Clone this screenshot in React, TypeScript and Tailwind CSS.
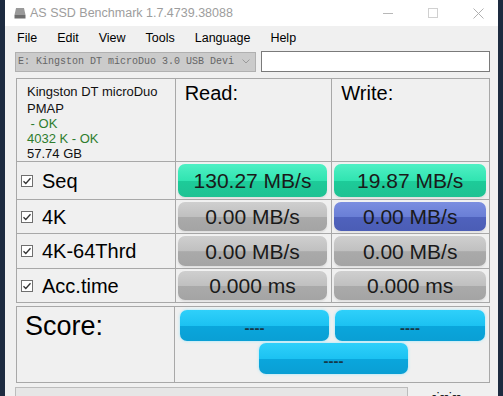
import React from "react";

const font = { fontFamily: '"Liberation Sans", Arial, sans-serif' };

const GREEN =
  "bg-[linear-gradient(to_bottom,#4ff0c4,#31e4b1_50%,#1dcb99_52%,#1fc293)]";
const GRAY =
  "bg-[linear-gradient(to_bottom,#cfcfcf,#c0c0c0_50%,#aaaaaa_52%,#a4a4a4)]";
const BLUE =
  "bg-[linear-gradient(to_bottom,#7b8ee0,#6a7fd6_50%,#4f62bd_52%,#4b5db5)]";
const CYAN =
  "bg-[linear-gradient(to_bottom,#2fd0fa,#1cc2f2_50%,#0aa6dc_52%,#0a9fd4)]";

const rows = [
  { label: "Seq", read: "130.27 MB/s", write: "19.87 MB/s", rc: GREEN, wc: GREEN, h: "h-[38px]" },
  { label: "4K", read: "0.00 MB/s", write: "0.00 MB/s", rc: GRAY, wc: BLUE, h: "h-[34px]" },
  { label: "4K-64Thrd", read: "0.00 MB/s", write: "0.00 MB/s", rc: GRAY, wc: GRAY, h: "h-[35px]" },
  { label: "Acc.time", read: "0.000 ms", write: "0.000 ms", rc: GRAY, wc: GRAY, h: "h-[34px]" },
];

function Check() {
  return (
    <svg width="12" height="12" viewBox="0 0 12 12" className="shrink-0">
      <rect x="0.5" y="0.5" width="11" height="11" fill="#fff" stroke="#6f6f6f" />
      <path d="M2.5 6.2 L4.8 8.5 L9.5 3.2" fill="none" stroke="#333" strokeWidth="1.3" />
    </svg>
  );
}

function Bar({ text, color }: { text: string; color: string }) {
  return (
    <div
      className={`h-full w-full rounded-[7px] ${color} flex items-center justify-center pt-[1px] text-[21px] text-[#1a1a1a] shadow-[0_0_2px_rgba(255,255,255,0.9),0_1px_2px_rgba(0,0,0,0.15)]`}
    >
      {text}
    </div>
  );
}

function ScoreBar({ className }: { className: string }) {
  return (
    <div
      className={`${className} h-[31px] rounded-[7px] ${CYAN} flex items-center justify-center pt-[3px] text-[15px] leading-[15px] font-bold text-[#163848] shadow-[0_0_3px_rgba(140,230,255,0.9)]`}
    >
      ----
    </div>
  );
}

export default function App() {
  return (
    <div className="flex w-[503px] h-[396px] overflow-hidden bg-[#1d2b40]" style={font}>
      <div className="w-[5px] shrink-0" />
      <div className="w-[493px] shrink-0 bg-[#f0f0f0] overflow-hidden">
        {/* title bar */}
        <div className="h-[26px] bg-white flex items-center relative">
          <svg width="12" height="12" viewBox="0 0 12 12" className="ml-[9px]">
            <path d="M2 1 H10 L11.5 8 H0.5 Z" fill="#9a9a9a" />
            <rect x="0.5" y="8" width="11" height="3.5" fill="#6e6e6e" />
          </svg>
          <span className="ml-[4px] text-[12.5px] text-[#9d9d9d]">AS SSD Benchmark 1.7.4739.38088</span>
          <div className="absolute left-[378px] top-[13px] w-[10px] h-px bg-[#b8b8b8]" />
          <div className="absolute left-[423px] top-[8px] w-[10px] h-[10px] border border-[#d0d0d0]" />
          <svg width="11" height="11" viewBox="0 0 11 11" className="absolute left-[468px] top-[8px]">
            <path d="M0.5 0.5 L10.5 10.5 M10.5 0.5 L0.5 10.5" stroke="#b0b0b0" strokeWidth="1" />
          </svg>
        </div>

        {/* menu */}
        <div className="h-[24px] flex items-center gap-[20px] pl-[12px] text-[12.5px] text-black">
          <span>File</span>
          <span>Edit</span>
          <span>View</span>
          <span>Tools</span>
          <span>Language</span>
          <span>Help</span>
        </div>

        {/* drive row */}
        <div className="flex items-center mt-[1px] h-[21px]">
          <div className="ml-[10px] w-[241px] h-[20px] bg-[#cbcbcb] border border-[#b0b0b0] flex items-center">
            <span
              className="ml-[2px] text-[10px] text-[#666] whitespace-nowrap"
              style={{ fontFamily: '"Liberation Mono", monospace' }}
            >
              E: Kingston DT microDuo 3.0 USB Devi
            </span>
            <svg width="8" height="5" viewBox="0 0 8 5" className="ml-auto mr-[5px]">
              <path d="M0.5 0.5 L4 4 L7.5 0.5" fill="none" stroke="#9a9a9a" />
            </svg>
          </div>
          <div className="ml-[5px] w-[229px] h-[21px] bg-white border border-[#7a7a7a]" />
        </div>

        {/* results table */}
        <div className="ml-[11px] mt-[6px] w-[474px] border-l border-t border-[#a8a8a8]">
          <div className="flex h-[83px]">
            <div className="w-[159px] border-r border-b border-[#a8a8a8] pl-[10px] pt-[5px] text-[13px] leading-[15px] text-[#111]">
              <div className="mb-[2px]">Kingston DT microDuo</div>
              <div>PMAP</div>
              <div className="text-[#2e7d2e]">&nbsp;- OK</div>
              <div className="text-[#2e7d2e]">4032 K - OK</div>
              <div>57.74 GB</div>
            </div>
            <div className="w-[157px] border-r border-b border-[#a8a8a8] pl-[9px] pt-[3px] text-[20px] leading-[22px]">
              Read:
            </div>
            <div className="w-[158px] border-r border-b border-[#a8a8a8] pl-[9px] pt-[3px] text-[20px] leading-[22px]">
              Write:
            </div>
          </div>
          {rows.map((r) => (
            <div key={r.label} className={`flex ${r.h}`}>
              <div className="w-[159px] border-r border-b border-[#a8a8a8] flex items-center pl-[4px] gap-[9px] text-[20px]">
                <Check />
                <span>{r.label}</span>
              </div>
              <div className="w-[157px] border-r border-b border-[#a8a8a8] pl-[2px] pr-[4px] py-[2px]">
                <Bar text={r.read} color={r.rc} />
              </div>
              <div className="w-[158px] border-r border-b border-[#a8a8a8] pl-[2px] pr-[3px] py-[2px]">
                <Bar text={r.write} color={r.wc} />
              </div>
            </div>
          ))}
        </div>

        {/* score */}
        <div className="ml-[11px] mt-[3px] w-[474px] h-[77px] border border-[#a8a8a8] flex">
          <div className="w-[158px] border-r border-[#a8a8a8] pl-[8px] pt-[4px] text-[27px] leading-[30px]">
            Score:
          </div>
          <div className="flex-1 flex flex-col pt-[3px]">
            <div className="flex gap-[6px] pl-[5px]">
              <ScoreBar className="w-[149px]" />
              <ScoreBar className="w-[150px]" />
            </div>
            <ScoreBar className="ml-[84px] mt-[2px] w-[149px]" />
          </div>
        </div>

        {/* status */}
        <div className="flex mt-[4px]">
          <div className="ml-[10px] w-[393px] h-[16px] bg-[#e6e6e6] border border-[#bcbcbc]" />
          <span className="ml-[24px] mt-[1px] text-[13px] leading-[13px] text-[#222]">-:--:--</span>
        </div>
      </div>
      <div className="flex-1" />
    </div>
  );
}
